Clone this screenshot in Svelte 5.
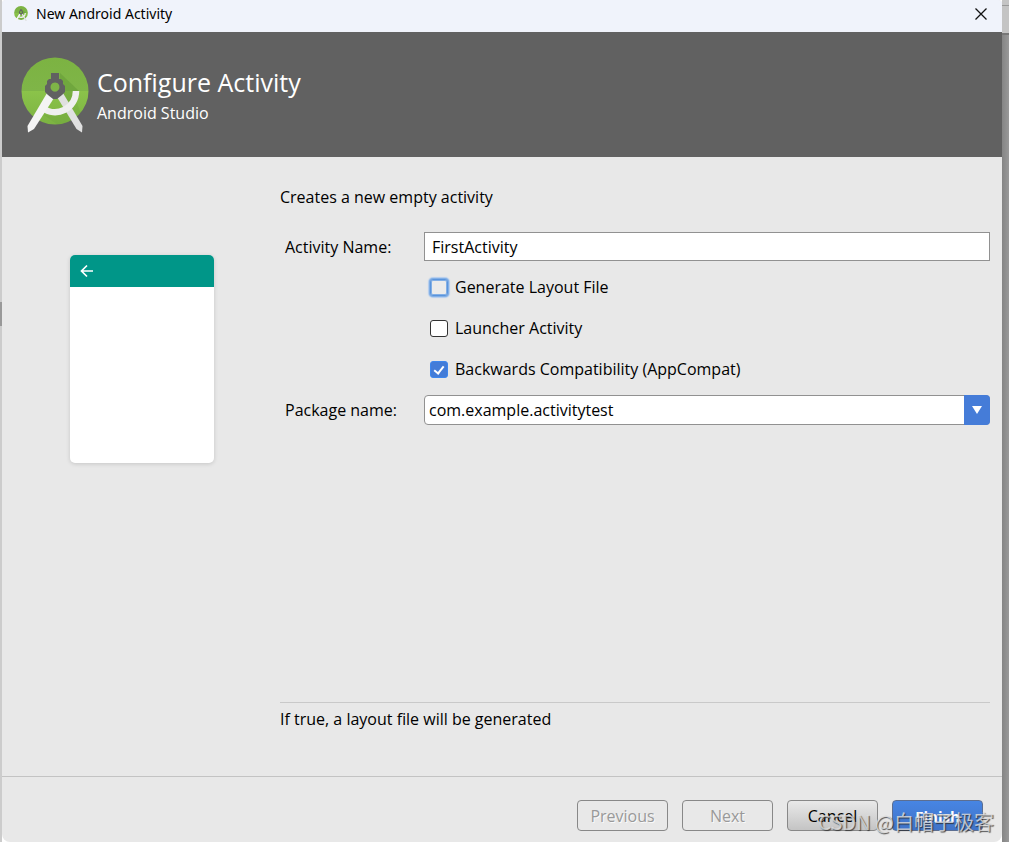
<script>
  let activityName = 'FirstActivity';
  let packageName = 'com.example.activitytest';

  let options = [
    { id: 'generate-layout', label: 'Generate Layout File', checked: false, highlighted: true },
    { id: 'launcher', label: 'Launcher Activity', checked: false },
    { id: 'compat', label: 'Backwards Compatibility (AppCompat)', checked: true }
  ];

  let packages = ['com.example.activitytest'];
</script>

{#snippet logo(id)}
  <svg class="logo" viewBox="0 0 68 76" aria-hidden="true">
    <defs>
      <linearGradient id="{id}-green" x1="0" y1="0" x2="0" y2="1">
        <stop offset="0" stop-color="#7cb342" />
        <stop offset="0.5" stop-color="#7fb548" />
        <stop offset="0.5" stop-color="#8bc34a" />
        <stop offset="1" stop-color="#7cb342" />
      </linearGradient>
      <clipPath id="{id}-disc">
        <circle cx="34" cy="34" r="33.5" />
      </clipPath>
    </defs>
    <circle cx="34" cy="34" r="33.5" fill="url(#{id}-green)" />
    <g clip-path="url(#{id}-disc)">
      <path d="M39 16 L58 34 L50 46 L38 38 Z" fill="#558b2f" opacity="0.35" />
      <path d="M20 56 Q38 66 56 46 L62 62 L40 70 Z" fill="#558b2f" opacity="0.15" />
    </g>
    <path d="M42 36 L61.500 69 L61 75.500 L55.500 72 L36 40 Z" fill="#e0e0e0" />
    <path
      d="M21.500 51 A21 21 0 0 0 55 34"
      fill="none"
      stroke="#efefef"
      stroke-width="6.500"
    />
    <path d="M26 36 L33 41 L13 72 L7 75.500 L6.500 69 Z" fill="#f4f4f4" />
    <path
      fill="#616161"
      fill-rule="evenodd"
      d="M30 16 h8 v6 h2 l2 2 v3 l2 2 v6 l-3 3 l-5 4 h-4 l-5 -4 l-3 -3 v-6 l2 -2 v-3 l2 -2 h2 Z M34 25.500 a4.500 4.500 0 1 0 0.010 0 Z"
    />
  </svg>
{/snippet}

<div class="backdrop">
  <div class="window">
    <header class="titlebar">
      <span class="titlebar-icon">{@render logo('small')}</span>
      <span class="titlebar-text">New Android Activity</span>
      <button class="close" aria-label="Close">
        <svg viewBox="0 0 12 12" width="12" height="12" aria-hidden="true">
          <path d="M0.500 0.500 L11.500 11.500 M11.500 0.500 L0.500 11.500" stroke="#111" stroke-width="1.300" />
        </svg>
      </button>
    </header>

    <div class="banner">
      <span class="banner-logo">{@render logo('large')}</span>
      <div>
        <h1>Configure Activity</h1>
        <p>Android Studio</p>
      </div>
    </div>

    <main class="content">
      <div class="preview-pane">
        <div class="preview">
          <div class="preview-bar">
            <svg viewBox="0 0 14 14" width="14" height="14" aria-hidden="true">
              <path d="M13 7 H1.500 M7 1.500 L1.500 7 L7 12.500" fill="none" stroke="#fff" stroke-width="1.700" />
            </svg>
          </div>
        </div>
      </div>

      <form class="form">
        <p class="intro">Creates a new empty activity</p>

        <div class="row">
          <label for="activity-name">Activity Name:</label>
          <input id="activity-name" class="text" type="text" bind:value={activityName} />
        </div>

        <div class="options">
          {#each options as option}
            <label class="option" for={option.id}>
              <input
                id={option.id}
                type="checkbox"
                class:highlighted={option.highlighted}
                bind:checked={option.checked}
              />
              {option.label}
            </label>
          {/each}
        </div>

        <div class="row">
          <label for="package-name">Package name:</label>
          <div class="combo">
            <select id="package-name" bind:value={packageName}>
              {#each packages as name}
                <option value={name}>{name}</option>
              {/each}
            </select>
            <span class="combo-arrow">
              <svg viewBox="0 0 10 8" width="10" height="8" aria-hidden="true">
                <path d="M0 0 H10 L5 8 Z" fill="#fff" />
              </svg>
            </span>
          </div>
        </div>

        <p class="hint">If true, a layout file will be generated</p>
      </form>
    </main>

    <footer class="footer">
      <button class="button" disabled>Previous</button>
      <button class="button" disabled>Next</button>
      <button class="button cancel">Cancel</button>
      <button class="button finish">Finish</button>
    </footer>
  </div>

  <span class="watermark">CSDN @白帽子极客</span>
</div>

<style>
  :global(body) {
    margin: 0;
    font-family: 'Open Sans', 'Noto Sans CJK SC', sans-serif;
    font-size: 16px;
    line-height: 20px;
    color: #000;
  }

  h1,
  p {
    margin: 0;
    font-weight: normal;
  }

  .backdrop {
    position: relative;
    display: flex;
    box-sizing: border-box;
    min-height: 100vh;
    padding: 0 7px 0 2px;
    background:
      linear-gradient(#c4c4c4 5px, #999 5px 6px, #c4c4c4 6px 33px, #777 33px 35px, transparent 35px) right / 7px 100% no-repeat,
      linear-gradient(to right, #858585, #999) right / 7px 100% no-repeat,
      linear-gradient(#ccc 302px, #999 302px 326px, #ccc 326px) left / 2px 100% no-repeat;
  }

  .window {
    display: flex;
    flex: 1;
    flex-direction: column;
    background-color: #e8e8e8;
    border-radius: 4px 4px 8px 8px;
    overflow: hidden;
  }

  .titlebar {
    display: flex;
    align-items: center;
    height: 32px;
    padding: 0 15px 5px 12px;
    box-sizing: border-box;
    background-color: #f0f3fb;
    font-family: 'Noto Sans', sans-serif;
    font-size: 14px;
  }

  .titlebar-icon {
    width: 14px;
    margin-right: 8px;
  }

  .logo {
    display: block;
    width: 100%;
  }

  .close {
    display: flex;
    margin-left: auto;
    padding: 0;
    border: 0;
    background: none;
  }

  .banner {
    display: flex;
    align-items: center;
    gap: 8px;
    height: 125px;
    padding-left: 19px;
    background-color: #616161;
    color: #fff;
  }

  .banner-logo {
    width: 68px;
  }

  .banner h1 {
    font-size: 25px;
    line-height: 36px;
  }

  .banner p {
    line-height: 26px;
  }

  .content {
    display: flex;
    flex: 1;
  }

  .preview-pane {
    width: 278px;
    padding: 98px 0 0 68px;
    box-sizing: border-box;
  }

  .preview {
    width: 144px;
    height: 208px;
    background-color: #fff;
    border-radius: 5px;
    box-shadow: 0 1px 4px rgba(0, 0, 0, 0.15);
    overflow: hidden;
  }

  .preview-bar {
    display: flex;
    align-items: center;
    height: 32px;
    padding-left: 10px;
    background-color: #009688;
  }

  .form {
    display: flex;
    flex: 1;
    flex-direction: column;
    padding: 30px 12px 0 0;
  }

  .intro {
    margin-bottom: 25px;
  }

  .row {
    display: flex;
    align-items: center;
    padding-left: 5px;
  }

  .row > label {
    width: 139px;
  }

  .text {
    flex: 1;
    box-sizing: border-box;
    height: 29px;
    padding: 0 7px;
    border: 1px solid #919191;
    background-color: #fff;
    font: inherit;
  }

  .options {
    display: flex;
    flex-direction: column;
    align-items: flex-start;
    gap: 21px;
    padding: 16px 0 16px 150px;
  }

  .option {
    display: flex;
    align-items: center;
    gap: 7px;
  }

  .option input {
    appearance: none;
    display: flex;
    justify-content: center;
    width: 18px;
    height: 17px;
    margin: 0;
    box-sizing: border-box;
    border: 1px solid #333;
    border-radius: 3px;
    background-color: #fff;
  }

  .option input.highlighted {
    border-color: #5a94dc;
    background-color: #ebebeb;
    box-shadow: 0 0 0 1px #82afe6, 0 0 1px 2px #b3cdee, inset 0 0 0 1px #82afe6;
  }

  .option input:checked {
    border-color: #3d87ee;
    background-color: #437cd8;
  }

  .option input:checked::after {
    content: '';
    width: 4px;
    height: 8px;
    margin-top: 2px;
    border: solid #fff;
    border-width: 0 2px 2px 0;
    transform: rotate(38deg);
  }

  .combo {
    position: relative;
    display: flex;
    flex: 1;
  }

  .combo select {
    appearance: none;
    flex: 1;
    height: 30px;
    padding: 0 26px 0 4px;
    border: 1px solid #919191;
    border-radius: 4px;
    background-color: #fff;
    color: #000;
    font: inherit;
  }

  /* Blue drop-down handle sits over the select's right edge */
  .combo-arrow {
    position: absolute;
    top: 0;
    right: 0;
    bottom: 0;
    display: flex;
    align-items: center;
    justify-content: center;
    width: 26px;
    background-color: #457cd8;
    border-radius: 0 4px 4px 0;
    pointer-events: none;
  }

  .hint {
    margin-top: auto;
    padding: 6px 0 47px;
    border-top: 1px solid #c9c9c9;
  }

  .footer {
    display: flex;
    justify-content: flex-end;
    gap: 14px;
    padding: 23px 19px 11px;
    border-top: 1px solid #c3c3c3;
  }

  .button {
    width: 91px;
    height: 31px;
    padding: 0;
    border: 1px solid #888;
    border-radius: 4px;
    background: none;
    color: #000;
    font: inherit;
  }

  .button:disabled {
    color: #999;
    text-shadow: 1px 1px 0 #fafafa;
  }

  .cancel {
    background: linear-gradient(#e9e9e9, #c4c4c4);
  }

  .finish {
    border-color: #5c6e91;
    background: linear-gradient(#4785e3, #4073c8);
    color: #fff;
    font-size: 15px;
    font-weight: bold;
  }

  .watermark {
    position: absolute;
    right: 15px;
    bottom: 8px;
    color: rgba(225, 225, 225, 0.8);
    font-family: 'Noto Sans CJK SC', sans-serif;
    font-size: 20px;
    line-height: 24px;
    text-shadow: 1px 1px 1px rgba(40, 40, 40, 0.8);
    white-space: nowrap;
    pointer-events: none;
  }
</style>
